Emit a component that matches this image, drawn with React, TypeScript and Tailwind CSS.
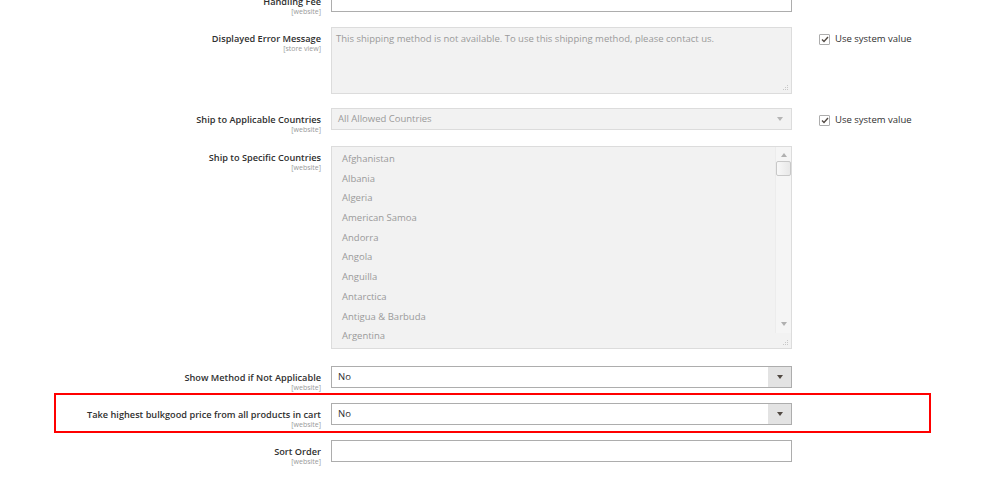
import React from "react";

const countries = [
  "Afghanistan",
  "Albania",
  "Algeria",
  "American Samoa",
  "Andorra",
  "Angola",
  "Anguilla",
  "Antarctica",
  "Antigua & Barbuda",
  "Argentina",
];

function Label({ text, scope }: { text: string; scope: string }) {
  return (
    <div className="w-[321px] h-[22px] shrink-0 text-right pt-[6px]">
      <div className="text-[9.2px] leading-[11px] font-semibold text-[#303030] whitespace-nowrap">{text}</div>
      <div className="text-[7px] leading-[9px] text-[#999] whitespace-nowrap">{scope}</div>
    </div>
  );
}

function Arrow({ color }: { color: string }) {
  return (
    <svg width="6" height="4" viewBox="0 0 6 4">
      <path d="M0 0h6L3 4z" fill={color} />
    </svg>
  );
}

function UseSystem() {
  return (
    <div className="ml-[27px] flex items-center gap-[5px] h-[24px] pt-[1px]">
      <div className="w-[11px] h-[11px] border border-[#adadad] rounded-[1px] bg-white flex items-center justify-center">
        <svg width="8" height="7" viewBox="0 0 8 7">
          <path d="M1 3.5l2 2 4-4.5" fill="none" stroke="#514943" strokeWidth="1.4" />
        </svg>
      </div>
      <span className="text-[9.5px] text-[#303030]">Use system value</span>
    </div>
  );
}

function Select({ value }: { value: string }) {
  return (
    <div className="ml-[10px] w-[461px] h-[22px] border border-[#adadad] bg-white flex items-stretch">
      <div className="flex-1 pl-[6px] flex items-center text-[9.5px] text-[#303030]">{value}</div>
      <div className="w-[23px] bg-[#e3e3e3] flex items-center justify-center">
        <Arrow color="#514943" />
      </div>
    </div>
  );
}

function Grip() {
  return (
    <svg width="7" height="7" viewBox="0 0 7 7">
      <g fill="#c8c8c8">
        <rect x="5" y="1" width="1" height="1" />
        <rect x="3" y="3" width="1" height="1" />
        <rect x="5" y="3" width="1" height="1" />
        <rect x="1" y="5" width="1" height="1" />
        <rect x="3" y="5" width="1" height="1" />
        <rect x="5" y="5" width="1" height="1" />
      </g>
    </svg>
  );
}

export default function App() {
  return (
    <div className="w-[999px] h-[479px] overflow-hidden bg-white font-['Open_Sans',sans-serif]">
      {/* Handling Fee */}
      <div className="flex -mt-[10px]">
        <Label text="Handling Fee" scope="[website]" />
        <div className="ml-[10px] w-[461px] h-[22px] border border-[#adadad] bg-white"></div>
      </div>

      {/* Displayed Error Message */}
      <div className="flex mt-[15px]">
        <Label text="Displayed Error Message" scope="[store view]" />
        <div className="relative ml-[10px] w-[461px] h-[67px] border border-[#dcdcdc] bg-[#f2f2f2] pl-[4px] pt-[4px] text-[9.5px] leading-[14px] text-[#9a9a9a]">
          This shipping method is not available. To use this shipping method, please contact us.
          <div className="absolute right-[2px] bottom-[2px]">
            <Grip />
          </div>
        </div>
        <UseSystem />
      </div>

      {/* Ship to Applicable Countries */}
      <div className="flex mt-[14px]">
        <Label text="Ship to Applicable Countries" scope="[website]" />
        <div className="ml-[10px] w-[461px] h-[22px] border border-[#dcdcdc] bg-[#f2f2f2] flex items-center">
          <div className="flex-1 pl-[6px] text-[9.5px] text-[#9a9a9a]">All Allowed Countries</div>
          <div className="w-[23px] flex items-center justify-center">
            <Arrow color="#b5b5b5" />
          </div>
        </div>
        <UseSystem />
      </div>

      {/* Ship to Specific Countries */}
      <div className="flex mt-[14px]">
        <Label text="Ship to Specific Countries" scope="[website]" />
        <div className="relative ml-[10px] w-[461px] h-[203px] border border-[#dcdcdc] bg-[#f2f2f2] flex">
          <div className="flex-1 pt-[2px] pl-[10px]">
            {countries.map((c) => (
              <div key={c} className="h-[19.7px] leading-[19.7px] text-[9.5px] text-[#9a9a9a]">
                {c}
              </div>
            ))}
          </div>
          <div className="w-[16px] h-[186px] bg-[#f5f5f5] border-l border-[#ececec] flex flex-col items-center">
            <div className="pt-[6px] pb-[4px]">
              <svg width="6" height="4" viewBox="0 0 6 4">
                <path d="M0 4h6L3 0z" fill="#b0b0b0" />
              </svg>
            </div>
            <div className="w-[15px] h-[15px] bg-gradient-to-r from-[#f8f8f8] to-[#e8e8e8] border border-[#c8c8c8] rounded-[2px]"></div>
            <div className="flex-1"></div>
            <div className="pb-[7px]">
              <Arrow color="#b0b0b0" />
            </div>
          </div>
          <div className="absolute right-[2px] bottom-[2px]">
            <Grip />
          </div>
        </div>
      </div>

      {/* Show Method if Not Applicable */}
      <div className="flex mt-[17px]">
        <Label text="Show Method if Not Applicable" scope="[website]" />
        <Select value="No" />
      </div>

      {/* Take highest bulkgood price */}
      <div className="relative flex mt-[15px]">
        <div className="absolute left-[54px] top-[-10px] w-[877px] h-[40px] border-2 border-[#ff0000]"></div>
        <Label text="Take highest bulkgood price from all products in cart" scope="[website]" />
        <Select value="No" />
      </div>

      {/* Sort Order */}
      <div className="flex mt-[15px]">
        <Label text="Sort Order" scope="[website]" />
        <div className="ml-[10px] w-[461px] h-[22px] border border-[#adadad] bg-white"></div>
      </div>
    </div>
  );
}
